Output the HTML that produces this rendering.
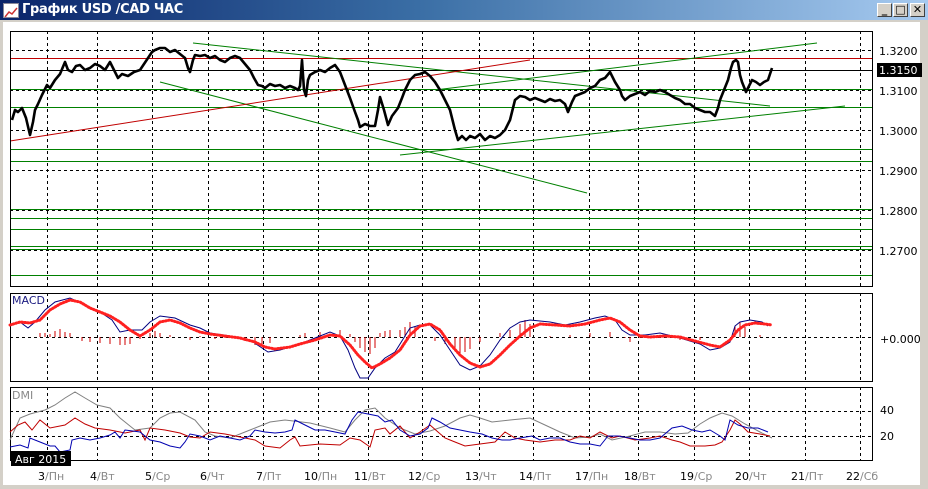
<!DOCTYPE html>
<html><head><meta charset="utf-8">
<style>
html,body{margin:0;padding:0;background:#d4d0c8;}
body{width:928px;height:489px;position:relative;overflow:hidden;font-family:Verdana,"DejaVu Sans",sans-serif;}
#title{position:absolute;left:0;top:0;width:928px;height:20px;background:linear-gradient(90deg,#0a246a 0%,#3a6ea5 45%,#a6caf0 100%);}
#title .t{position:absolute;left:22px;top:2px;color:#fff;font:bold 13px "DejaVu Sans",Verdana,sans-serif;letter-spacing:-0.3px;}
#ico{position:absolute;left:3px;top:3px;width:14px;height:13px;background:#fff;border:1px solid #889;}
.btn{position:absolute;top:3px;width:15px;height:14px;background:#d4d0c8;border:1px solid;border-color:#fff #404040 #404040 #fff;box-sizing:border-box;font:bold 11px "DejaVu Sans",sans-serif;text-align:center;line-height:12px;color:#000;}
#body{position:absolute;left:3px;top:22px;width:917px;height:463px;background:#fff;}
svg text{font-family:Verdana,"DejaVu Sans",sans-serif;}
</style></head><body>
<div id="title"><div id="ico"><svg width="14" height="13"><polyline points="1,11 5,6 8,8 13,2" fill="none" stroke="#c33" stroke-width="1.5"/></svg></div><div class="t">График USD /CAD  ЧАС</div>
<div class="btn" style="left:877px">_</div><div class="btn" style="left:893px">□</div><div class="btn" style="left:910px">✕</div></div>
<div id="body"></div>
<svg width="928" height="489" style="position:absolute;left:0;top:0">
<g stroke="#000" stroke-dasharray="3,3" stroke-width="1" fill="none">
<path d="M47.5 31V287M97.5 31V287M152.5 31V287M208.5 31V287M263.5 31V287M318.5 31V287M368.5 31V287M422.5 31V287M479.5 31V287M533.5 31V287M589.5 31V287M638.5 31V287M694.5 31V287M749.5 31V287M805.5 31V287M860.5 31V287"/>
<path d="M47.5 293V382M97.5 293V382M152.5 293V382M208.5 293V382M263.5 293V382M318.5 293V382M368.5 293V382M422.5 293V382M479.5 293V382M533.5 293V382M589.5 293V382M638.5 293V382M694.5 293V382M749.5 293V382M805.5 293V382M860.5 293V382"/>
<path d="M47.5 387V461M97.5 387V461M152.5 387V461M208.5 387V461M263.5 387V461M318.5 387V461M368.5 387V461M422.5 387V461M479.5 387V461M533.5 387V461M589.5 387V461M638.5 387V461M694.5 387V461M749.5 387V461M805.5 387V461M860.5 387V461"/>
<path d="M10 50.5H873M10 90.5H873M10 130.5H873M10 170.5H873M10 210.5H873M10 250.5H873M10 337.5H873M10 411.5H873M10 436.5H873"/>
</g>
<g stroke="#008000" stroke-width="1">
<path d="M10 89.5H873M10 107.5H873M10 149.5H873M10 161.5H873M10 209.5H873M10 218.5H873M10 229.5H873M10 246.5H873M10 249.5H873M10 275.5H873"/>
</g>
<path d="M10 58.5H873" stroke="#c00000"/>
<path d="M10 70.5H873" stroke="#000"/>
<g stroke="#008000" stroke-width="1" fill="none">
<path d="M193 43L770 106"/>
<path d="M160 82L587 193"/>
<path d="M400 155L845 106"/>
<path d="M435 90L817 43"/>
</g>
<path d="M10 141L530 60" stroke="#c00000" fill="none"/>
<polyline fill="none" stroke="#000" stroke-width="2.6" stroke-linejoin="round" points="12,120 15,110 18,112 22,108 26,118 30,135 33,122 35,110 38,104 42,95 47,85 50,88 55,80 60,74 65,62 68,70 72,72 76,66 80,65 85,70 90,68 95,64 100,66 105,70 110,62 114,70 118,78 122,74 128,76 134,72 140,70 144,64 148,58 152,52 155,50 160,48 165,48 170,52 175,50 180,54 185,58 188,68 190,72 193,60 195,55 200,56 205,55 210,58 215,56 220,60 225,62 230,58 235,56 240,58 245,64 250,70 254,78 258,85 262,86 265,88 270,84 275,86 280,85 285,88 290,86 295,88 298,90 300,86 302,60 304,90 306,96 308,80 310,75 315,72 320,70 325,72 330,68 335,65 340,72 345,85 350,98 355,112 358,120 360,127 365,124 370,126 375,126 378,110 380,97 384,110 388,125 392,116 398,108 402,98 405,90 410,80 415,75 420,74 425,72 430,76 435,82 440,90 445,100 450,110 452,118 455,130 458,140 462,136 466,140 470,136 475,138 480,134 485,140 490,136 495,138 500,135 505,130 510,120 513,108 515,100 520,96 525,97 530,100 535,98 540,100 545,102 550,99 555,101 560,100 565,104 568,112 572,102 575,96 580,94 585,92 590,88 595,86 600,80 605,78 610,72 615,82 620,90 622,96 625,100 630,96 635,94 640,92 645,95 650,91 655,92 660,90 665,92 670,95 675,98 680,100 685,104 690,104 695,108 700,110 705,112 710,112 715,116 718,108 720,100 724,90 728,80 731,68 733,62 736,60 738,62 740,75 742,82 746,92 749,86 752,80 756,82 760,85 764,82 768,80 770,74 772,68"/>
<rect x="10.5" y="31.5" width="862" height="255" fill="none" stroke="#000"/>
<rect x="10.5" y="293.5" width="862" height="88" fill="none" stroke="#000"/>
<rect x="10.5" y="387.5" width="862" height="73" fill="none" stroke="#000"/>
<g font-size="11" fill="#000">
<text x="879" y="55">1.3200</text>
<text x="879" y="95">1.3100</text>
<text x="879" y="135">1.3000</text>
<text x="879" y="175">1.2900</text>
<text x="879" y="215">1.2800</text>
<text x="879" y="255">1.2700</text>
</g>
<rect x="877" y="63" width="45" height="14" fill="#000"/>
<text x="879" y="74" font-size="11" fill="#fff">1.3150</text>
<text x="12" y="304" font-size="11" fill="#1a1a80">MACD</text>
<text x="880" y="343" font-size="11">+0.000</text>
<g stroke="#d00000" stroke-width="1">
<path d="M40 337V333M45 337V333M50 337V334M55 337V331M60 337V329M65 337V332M70 337V333M82 337V341M90 337V342M100 337V343M110 337V344M120 337V345M125 337V345M130 337V344M140 337V339M150 337V333M155 337V331M160 337V333M170 337V335M190 337V340M200 337V336M215 337V339M225 337V338M245 337V341M255 337V345M262 337V346M270 337V343M300 337V335M305 337V333M320 337V332M340 337V330M350 337V334M355 337V342M360 337V348M365 337V352M370 337V354M375 337V348M380 337V333M385 337V331M390 337V330M400 337V330M405 337V327M410 337V322M415 337V326M435 337V341M445 337V344M455 337V349M460 337V353M465 337V352M470 337V349M480 337V342M500 337V333M510 337V330M520 337V324M525 337V320M530 337V324M550 337V336M570 337V335M590 337V333M610 337V332M625 337V338M630 337V342M640 337V338M660 337V337M680 337V340M700 337V340M720 337V337M735 337V326M740 337V322M745 337V327M760 337V335"/>
</g>
<polyline fill="none" stroke="#000080" stroke-width="1" points="10,326 20,322 28,328 35,322 45,310 55,302 70,298 85,305 100,312 112,320 120,332 130,330 142,330 150,322 160,316 175,318 190,325 200,328 210,333 230,336 250,340 262,348 268,352 280,350 300,344 310,340 330,332 340,336 348,350 355,368 360,378 368,378 375,368 385,358 395,352 405,336 410,328 420,325 430,325 440,335 450,350 460,365 470,370 480,366 490,355 500,340 510,328 520,322 530,320 550,322 565,325 580,322 595,318 605,316 615,320 622,330 630,335 645,335 660,333 680,338 700,344 710,350 720,348 730,342 735,326 740,322 750,320 762,322 768,326"/>
<polyline fill="none" stroke="#ff2020" stroke-width="3" stroke-linecap="round" stroke-dasharray="1,2" points="10,325 20,322 30,323 40,320 50,310 60,304 70,300 80,302 90,308 100,312 110,316 120,322 130,330 140,336 150,330 160,322 170,320 180,323 190,328 200,332 210,334 225,336 240,338 255,342 265,347 275,349 290,347 300,344 315,340 330,335 340,336 350,345 358,355 365,362 372,368 380,364 390,358 400,350 410,335 420,326 430,324 440,330 450,344 460,355 470,363 480,367 490,364 500,355 510,345 520,336 530,328 540,324 555,325 570,326 585,324 600,320 610,318 620,322 630,330 640,336 650,337 665,336 680,337 695,341 710,345 720,347 730,340 738,330 745,325 755,323 765,324 772,325"/>
<text x="12" y="399" font-size="11" fill="#888">DMI</text>
<text x="880" y="414" font-size="11">40</text>
<text x="880" y="440" font-size="11">20</text>
<polyline fill="none" stroke="#808080" stroke-width="1" points="10,440 20,418 30,414 45,410 55,405 65,398 75,392 85,398 97,405 110,408 120,418 135,430 150,428 160,418 170,413 180,412 195,420 205,432 215,436 230,438 250,430 270,422 285,420 310,423 330,428 345,432 355,420 365,410 375,408 385,418 400,428 415,434 430,431 445,426 460,418 470,415 480,418 492,422 510,420 530,418 545,425 560,432 575,438 590,437 600,434 612,440 630,436 645,432 660,432 675,434 688,433 700,424 710,418 722,413 732,416 745,424 760,432 772,438"/>
<polyline fill="none" stroke="#c00000" stroke-width="1" points="10,432 18,425 25,422 32,430 40,420 50,428 65,425 75,418 85,424 95,428 110,430 125,433 140,430 145,440 150,428 165,430 180,433 190,437 200,438 210,432 225,434 235,436 245,438 255,440 265,446 280,448 290,440 295,437 300,446 320,444 340,445 350,438 360,440 370,447 375,430 385,428 390,434 400,426 410,438 420,432 430,425 438,432 445,438 455,442 465,446 480,444 495,442 505,432 515,438 525,440 540,442 555,440 570,440 580,436 590,438 600,432 612,438 620,436 635,440 650,438 660,436 672,440 680,442 690,446 705,446 715,445 722,442 730,430 735,420 740,424 748,432 760,434 770,436"/>
<polyline fill="none" stroke="#0000b0" stroke-width="1" points="10,447 20,445 28,448 30,438 40,442 50,446 55,446 60,452 70,450 72,440 80,438 90,440 100,438 110,435 115,432 120,438 125,430 140,432 150,440 160,442 170,446 180,448 185,442 190,434 200,436 210,440 220,436 230,438 240,440 250,436 255,430 265,432 275,433 285,432 292,430 295,420 305,425 315,430 325,430 335,432 345,434 352,420 358,412 368,414 378,416 385,422 392,420 400,430 410,436 420,434 428,428 432,418 440,422 450,428 460,430 470,432 482,434 492,438 502,440 510,440 520,438 532,436 540,440 550,438 560,438 570,442 580,444 590,444 600,446 608,436 618,436 630,438 640,440 650,440 660,438 672,428 682,426 692,430 702,432 710,430 720,436 725,440 730,420 738,425 748,428 758,428 768,432"/>
<rect x="11" y="451" width="60" height="15" fill="#000"/>
<text x="15" y="463" font-size="11" fill="#fff">Авг 2015</text>
<g font-size="11" fill="#000">
<text x="38" y="480">3<tspan fill="#888">/Пн</tspan></text>
<text x="90" y="480">4<tspan fill="#888">/Вт</tspan></text>
<text x="145" y="480">5<tspan fill="#888">/Ср</tspan></text>
<text x="200" y="480">6<tspan fill="#888">/Чт</tspan></text>
<text x="256" y="480">7<tspan fill="#888">/Пт</tspan></text>
<text x="304" y="480">10<tspan fill="#888">/Пн</tspan></text>
<text x="354" y="480">11<tspan fill="#888">/Вт</tspan></text>
<text x="408" y="480">12<tspan fill="#888">/Ср</tspan></text>
<text x="465" y="480">13<tspan fill="#888">/Чт</tspan></text>
<text x="519" y="480">14<tspan fill="#888">/Пт</tspan></text>
<text x="575" y="480">17<tspan fill="#888">/Пн</tspan></text>
<text x="624" y="480">18<tspan fill="#888">/Вт</tspan></text>
<text x="680" y="480">19<tspan fill="#888">/Ср</tspan></text>
<text x="735" y="480">20<tspan fill="#888">/Чт</tspan></text>
<text x="791" y="480">21<tspan fill="#888">/Пт</tspan></text>
<text x="846" y="480">22<tspan fill="#888">/Сб</tspan></text>
</g>
</svg>
</body></html>
